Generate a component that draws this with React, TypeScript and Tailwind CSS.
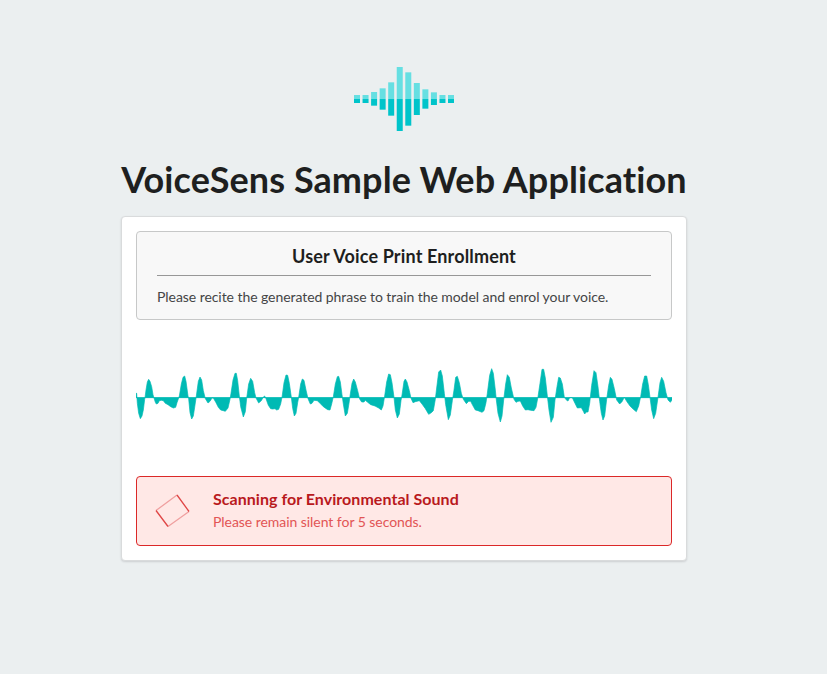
const BARS: [number, number][] = [
  [105, 129], [105, 129], [96, 137], [85, 149], [67, 167], [21, 213],
  [37, 197], [69, 165], [88, 146], [97, 135], [105, 129], [105, 129],
];

const WAVE =
  '18,113 18,100 20,100 22,130 26,160 31,176 36,168 40,150 44,118 45,113 48,90 52,66 56,58 60,64 65,80 69,104 72,114 76,127 79,132 84,130 88,122 94,121 100,122 106,130 114,134 122,140 130,144 137,142 141,128 146,114 148,108 154,72 159,52 164,48 168,64 174,108 176,116 180,158 185,177 190,168 195,135 199,108 205,64 210,51 215,60 220,92 226,116 234,129 240,124 246,114 250,114 258,128 265,142 272,150 280,152 286,154 294,144 300,118 303,100 309,60 315,40 319,40 323,62 328,108 332,140 340,171 346,155 350,115 356,72 362,55 368,64 374,98 378,114 386,129 394,122 ' +
  '400,111 404,108 408,116 415,136 422,146 428,147 435,146 440,150 446,148 452,132 456,112 462,68 468,45 473,46 478,70 484,112 488,145 493,168 498,160 503,128 506,112 512,72 517,57 522,61 528,90 534,116 541,132 546,130 552,121 562,122 570,130 580,140 593,149 600,150 605,132 610,110 616,72 622,50 626,49 631,66 636,104 640,132 646,168 652,160 657,130 660,108 666,70 671,57 676,66 683,92 689,117 695,126 702,126 706,121 712,126 722,134 735,138 746,144 754,150 759,138 764,108 770,66 776,42 781,44 786,68 792,112 796,150 ' +
  '802,174 808,162 813,122 816,105 822,64 826,57 831,66 838,92 843,115 849,128 856,125 868,122 876,132 886,146 896,163 904,158 910,152 916,118 920,84 926,36 932,30 937,48 943,100 947,134 955,179 961,165 967,122 972,90 977,52 982,49 988,68 994,100 1000,118 1009,131 1016,124 1022,124 1028,136 1036,150 1044,152 1056,157 1062,152 1068,128 1072,100 1079,46 1085,26 1090,40 1096,90 1099,120 1104,160 1111,186 1116,168 1121,120 1127,72 1132,44 1138,52 1144,84 1152,118 1158,127 1164,124 ' +
  '1171,123 1178,138 1186,150 1194,149 1202,151 1212,152 1218,142 1224,110 1230,70 1236,28 1241,28 1246,54 1252,108 1257,150 1263,187 1270,172 1275,120 1281,80 1286,52 1291,54 1297,72 1303,112 1310,121 1314,123 1319,113 1327,113 1333,126 1342,144 1354,143 1360,154 1364,162 1369,156 1374,156 1379,130 1385,76 1392,32 1398,38 1404,80 1409,124 1414,160 1419,180 1424,168 1430,118 1436,76 1441,52 1446,58 1453,86 1460,120 1469,132 1476,125 1483,112 1490,124 1500,138 1510,148 1519,155 1526,138 1532,110 1538,72 1544,48 1550,48 1555,74 1560,112 1565,150 1571,176 1577,160 1584,112 1590,68 1595,52 1601,64 1608,98 1614,120 1621,127 1626,120 1626,113';

function Logo() {
  return (
    <svg className="mx-auto block h-16 w-[100px]" viewBox="30 21 300 192">
      {BARS.map(([top, bottom], i) => (
        <g key={i}>
          <rect x={30 + i * 25.64} y={top} width="18" height={117 - top} fill="#66dfe2" />
          <rect x={30 + i * 25.64} y="117" width="18" height={bottom - 117} fill="#00c4ca" />
        </g>
      ))}
    </svg>
  );
}

function Waveform() {
  return (
    <svg className="mt-10 block h-[70px] w-[536px]" viewBox="18 0 1608 210">
      <rect x="18" y="111" width="1608" height="3" fill="#00bab4" fillOpacity="0.6" />
      <polygon points={WAVE} fill="#00bab4" stroke="#00bab4" strokeWidth="2" />
    </svg>
  );
}

export default function App() {
  return (
    <div className="h-[674px] overflow-hidden bg-[#ebeff0] font-['Lato',sans-serif] text-sm text-[#1e1f20] [font-variant-ligatures:none]">
      <main className="ml-[121px] w-[566px] pt-[67px]">
        <Logo />
        <h1 className="mt-[25px] h-12 text-center text-[36px] leading-[47px] font-bold tracking-[0.09px] whitespace-nowrap">
          VoiceSens Sample Web Application
        </h1>
        <section className="mt-3 h-[345px] rounded border border-[#d9dbdc] bg-white p-[14px] shadow-[0_1px_2px_0_rgba(34,36,38,0.15)]">
          <div className="h-[89px] rounded border border-[#c7c8c8] bg-[#f8f8f8] px-5 pt-3">
            <h2 className="h-6 text-center text-lg leading-6 font-bold tracking-[0.15px]">User Voice Print Enrollment</h2>
            <hr className="mt-[7px] h-px border-0 bg-[#979797]" />
            <p className="mt-[11px] leading-5 tracking-[-0.06px] text-[#444546]">
              Please recite the generated phrase to train the model and enrol your voice.
            </p>
          </div>
          <Waveform />
          <div className="mt-[46px] flex h-[70px] items-center rounded border border-[#db2828] bg-[#ffe8e6]">
            <svg className="ml-[17px] h-9 w-[38px] shrink-0" viewBox="0 0 38 36" fill="none" strokeWidth="1.3">
              <path d="M2 17.5 23 2M14 33.5 35 18.5" stroke="#f0a0a0" />
              <path d="M23 2 35 18.5M2 17.5l12 16" stroke="#e04646" />
            </svg>
            <div className="ml-[21px] pb-[3px]">
              <h3 className="text-base leading-[22px] font-bold tracking-[0.04px] text-[#b9191d]">Scanning for Environmental Sound</h3>
              <p className="mt-0.5 leading-5 tracking-[-0.05px] text-[#e25555]">Please remain silent for 5 seconds.</p>
            </div>
          </div>
        </section>
      </main>
    </div>
  );
}
